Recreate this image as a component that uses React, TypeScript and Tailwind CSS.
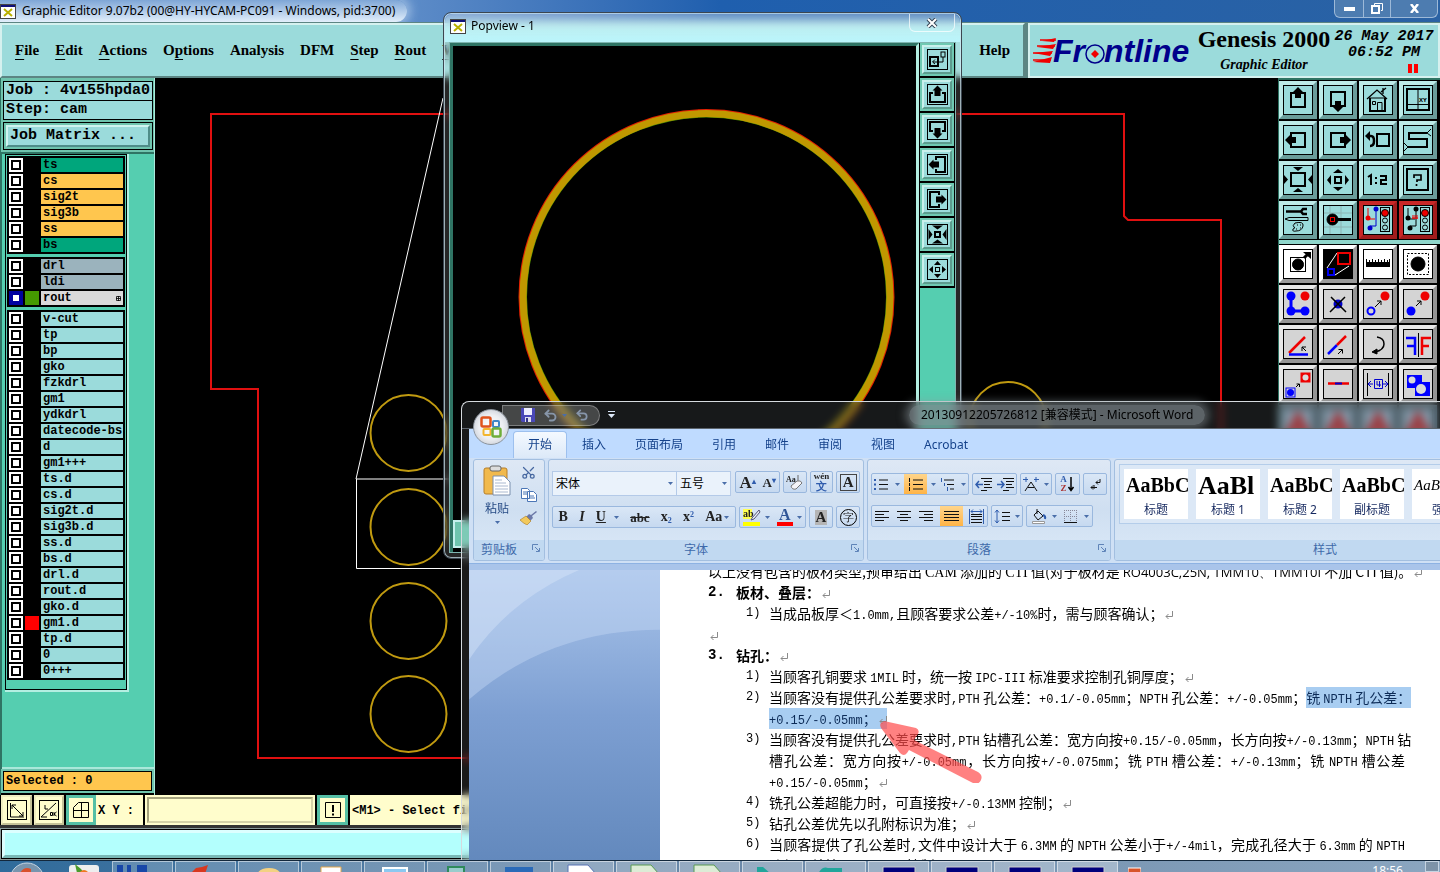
// App.tsx
import React from 'react';
import { LuScissors, LuUndo2, LuRedo2 } from 'react-icons/lu';

interface Layer {
  name: string;
  color: string;
  swatch?: string;
  active?: boolean;
}

const GREEN = 'bg-[#00a67c]';
const AMBER = 'bg-[#ffc64e]';
const GRAY = 'bg-[#9bb3bd]';
const AQUA = 'bg-[#9bdbdb]';

const boardLayers: Layer[] = [
  { name: 'ts', color: GREEN },
  { name: 'cs', color: AMBER },
  { name: 'sig2t', color: AMBER },
  { name: 'sig3b', color: AMBER },
  { name: 'ss', color: AMBER },
  { name: 'bs', color: GREEN },
];

const drillLayers: Layer[] = [
  { name: 'drl', color: GRAY },
  { name: 'ldi', color: GRAY },
  { name: 'rout', color: 'bg-[#dadada]', swatch: 'bg-[#459a00]', active: true },
];

const miscLayers: Layer[] = [
  'v-cut', 'tp', 'bp', 'gko', 'fzkdrl', 'gm1', 'ydkdrl', 'datecode-bs', 'd', 'gm1+++', 'ts.d', 'cs.d',
  'sig2t.d', 'sig3b.d', 'ss.d', 'bs.d', 'drl.d', 'rout.d', 'gko.d', 'gm1.d', 'tp.d', '0', '0+++',
].map((name) => ({ name, color: AQUA, swatch: name === 'gm1.d' ? 'bg-[#ff0000]' : undefined }));

const menus = [
  ['', 'F', 'ile'], ['', 'E', 'dit'], ['', 'A', 'ctions'], ['O', 'p', 'tions'], ['Analysis', '', ''],
  ['DFM', '', ''], ['', 'S', 'tep'], ['', 'R', 'out'], ['', 'W', 'indows'],
];

const MONO = "font-['Liberation_Mono',monospace]";
const SERIF = "font-['Liberation_Serif',serif]";
const SANS = "font-['Noto_Sans','Noto_Sans_CJK_SC',sans-serif]";

const XIcon: React.FC = () => (
  <svg width="16" height="15" viewBox="0 0 16 15">
    <rect x="0.5" y="0.5" width="15" height="14" fill="#fff" stroke="#444" />
    <rect x="1" y="1" width="14" height="2" fill="#10107a" />
    <path d="M4 5l8 7M12 5l-8 7" stroke="#b9b000" strokeWidth="2" />
  </svg>
);

/* ---------- layer list ---------- */

const LayerGroup: React.FC<{ layers: Layer[] }> = ({ layers }) => (
  <div className="flex flex-col gap-[2px] bg-black p-[2px]">
    {layers.map((l) => (
      <label key={l.name} className="flex h-[14px] gap-[2px]">
        <span className={`flex w-[14px] items-center justify-center ${l.active ? 'bg-[#0000a0]' : 'bg-white'}`}>
          <input
            type="checkbox"
            aria-label={l.name}
            className={`size-[10px] appearance-none border-2 bg-white ${l.active ? 'border-[#0000a0]' : 'border-black'}`}
          />
        </span>
        <span className={`w-[14px] ${l.swatch ?? 'bg-black'}`} />
        <span className={`flex flex-1 items-center justify-between pl-[2px] text-[12px] leading-[14px] font-bold whitespace-nowrap ${l.color}`}>
          {l.name}
          {l.active && (
            <svg width="5" height="5" viewBox="0 0 5 5" className="mr-[2px]">
              <path d="M.5.5h4v4h-4zM2.500 0v5M0 2.500h5" fill="none" stroke="#000" strokeWidth="0.8" />
            </svg>
          )}
        </span>
      </label>
    ))}
  </div>
);

const Sidebar: React.FC = () => (
  <aside className={`flex w-[155px] shrink-0 flex-col border-x border-[#2f7464] border-r-[#a9e8da] bg-[#2f7464] ${MONO}`}>
    <div className="flex flex-col gap-[2px] bg-[#6fc4ae] p-[2px] pr-px">
      <div className="mt-px border border-black bg-[#9bdbdb] text-[15px] leading-[18px] font-bold whitespace-pre">
        <div className="border-b border-black pl-[2px]">Job : 4v155hpda0</div>
        <div className="pl-[2px]">Step: cam</div>
      </div>
      <div className="border border-black p-[2px]">
        <button className="block w-full border-2 border-[#d0f4f0] border-r-[#4f8d89] border-b-[#4f8d89] bg-[#9bdbdb] px-[2px] text-left text-[15px] leading-[18px] font-bold">
          Job Matrix ...
        </button>
      </div>
    </div>
    <div className="mt-[2px] ml-px flex flex-1 flex-col border-b-2 border-[#a9e8da] bg-[#55ceb0] pl-[3px]">
      <div className="w-[124px] border-r-2 border-b-2 border-[#b4efe2]">
        <div className="flex flex-col gap-[3px] border border-black bg-[#55ceb0] px-px pt-px pb-[9px]">
          <LayerGroup layers={boardLayers} />
          <LayerGroup layers={drillLayers} />
          <LayerGroup layers={miscLayers} />
        </div>
      </div>
    </div>
    <div className="bg-[#6fc4ae] p-[2px]">
      <div className="border border-black bg-[#ffc64e] px-[2px] text-[12px] leading-[18px] font-bold">Selected : 0</div>
    </div>
    <div className="h-[2px] bg-black" />
  </aside>
);

/* ---------- toolbox ---------- */

const upArrow = <path d="M15 2l6 6h-3v5h-6V8H9z" fill="#000" stroke="none" />;
const nodes = (a: string, b: string, c: string) => (
  <>
    <path d="M5 3v11M5 14h7" stroke={b} />
    <path d="M13 4v17H7" stroke={c} />
    <circle cx="13" cy="4" r="2.5" fill={a} stroke="none" />
    <circle cx="5" cy="13" r="2.5" fill={b} stroke="none" />
    <circle cx="7" cy="23" r="2.5" fill={a} stroke="none" />
    <rect x="17.500" y="2.500" width="9" height="24" />
    <circle cx="22" cy="8" r="3.500" fill="#e00" stroke="#000" />
    <circle cx="22" cy="15.500" r="2.500" />
    <circle cx="22" cy="22.500" r="2.500" />
  </>
);

const viewTools: [string, React.ReactNode][] = [
  ['Pan up', <><rect x="8" y="8" width="14" height="14" strokeWidth="2" />{upArrow}</>],
  ['Pan down', <g transform="rotate(180 15 14.500)"><rect x="8" y="8" width="14" height="14" strokeWidth="2" />{upArrow}</g>],
  ['Home', <><path d="M4 14L14 5l10 9M18 7l5-4M20 3v6" strokeWidth="1.300" /><path d="M7 13v13h15V13" strokeWidth="2" /><path d="M6 13h16M9.500 16.500h3v3h-3zM14.500 26V17.500h4.500V26" /></>],
  ['Window XY', <><rect x="4" y="4" width="22" height="21" strokeWidth="2" /><path d="M15 4v21M4 19.500h22" /><text x="16" y="17" fontSize="6" fontWeight="bold" fill="#000" stroke="none">XY</text></>],
  ['Pan left', <g transform="rotate(-90 15 15)"><rect x="8" y="8" width="14" height="14" strokeWidth="2" />{upArrow}</g>],
  ['Pan right', <g transform="rotate(90 15 15)"><rect x="8" y="8" width="14" height="14" strokeWidth="2" />{upArrow}</g>],
  ['Previous view', <><rect x="14" y="9" width="12" height="12" strokeWidth="2" /><path d="M5 11h3q3 0 3 5t-4 5" strokeWidth="2.500" /><path d="M2 11l5-5v10z" fill="#000" stroke="none" /></>],
  ['Serpentine', <><path d="M24 8H6v6h18v8H5" strokeWidth="2" /><path d="M28 4l-4 4 4 3M1 18l4 4-4 4" /></>],
  ['Zoom out', <><rect x="8" y="8" width="14" height="13" strokeWidth="2" /><path d="M10 2h10l-5 4zM10 27h10l-5-4zM1 10v9l4-4.500zM29 10v9l-4-4.500z" fill="#000" stroke="none" /></>],
  ['Zoom in', <><rect x="12" y="12" width="6" height="6" strokeWidth="2" /><path d="M10 8h10l-5-4zM10 22h10l-5 4zM8 10v10l-4-5zM22 10v10l4-5z" fill="#000" stroke="none" /></>],
  ['Scale 1:2', <path d="M5 12l3-2v10M13 12v2M13 17v2M17 11h6v4h-5v4h6" strokeWidth="2" />],
  ['Help', <><rect x="4" y="4" width="21" height="21" strokeWidth="2" /><path d="M11 13v-3h7v5h-4v2M13.500 19v2" strokeWidth="1.700" /></>],
  ['Setup', <><path d="M3 6.500h15M24 4h-4l-2 2.500 2 2.500h4" strokeWidth="2.500" /><path d="M2 14l4-1.500h19v3H6z" /><path d="M12 18q9-2 8 3t-7 5q-4 1-3-2 3-1 1-2t1-4z" /><path d="M14 20h1M17 20h1M13 24h1M17 23h1" /></>],
  ['Probe', <><path d="M7 1v28M18 1v28M1 8h28M1 22h28" stroke="#8cb5b5" /><path d="M12 14.500h16" strokeWidth="3" /><circle cx="9.500" cy="14.500" r="5.500" fill="#000" /><rect x="7.500" y="12.500" width="4" height="4" stroke="#e00" /></>],
  ['Netlist', nodes('#00c', '#e00', '#00c')],
  ['Netlist compare', <>{nodes('#000', '#000', '#000')}<path d="M9 13h6M10 10v4M12 10v4M14 10v4" stroke="#e00" /></>],
];

const triangle = <path d="M5 25L15 6l10 19zM9 18h12" stroke="#d00" strokeWidth="4" />;

const editTools: [string, React.ReactNode][] = [
  ['Move feature', <><rect x="7.500" y="8.500" width="15" height="14" /><circle cx="15" cy="15.500" r="5.500" fill="#000" /><path d="M21 9l5-5" strokeWidth="3" /><path d="M20 3h8v7z" fill="#000" stroke="none" /></>],
  ['Resize', <><rect width="30" height="30" fill="#000" /><path d="M4 19L14 4M12 26l14-9" stroke="#fff" /><rect x="15" y="4" width="12" height="11" stroke="#e00" strokeWidth="2" /><rect x="5" y="20" width="6" height="6" stroke="#00e" strokeWidth="2" /></>],
  ['Measure', <><rect x="3" y="13" width="24" height="5" fill="#000" stroke="none" /><path d="M3.500 10v4M6.500 11v3M9.500 10v4M12.500 11v3M15.500 10v4M18.500 11v3M21.500 10v4M24.500 11v3M26.500 10v4" /></>],
  ['Select frame', <><rect x="4.500" y="4.500" width="21" height="21" strokeDasharray="2 1.500" /><circle cx="15" cy="15" r="7" fill="#000" /></>],
  ['Chain', <><path d="M8 7v15h14" stroke="#00f" strokeWidth="3" /><g stroke="none"><circle cx="8" cy="7" r="4.500" fill="#00f" /><circle cx="8" cy="22" r="4.500" fill="#00f" /><circle cx="22" cy="22" r="4.500" fill="#00f" /><circle cx="22" cy="7" r="4.500" fill="#e00" /></g></>],
  ['Delete', <><circle cx="15" cy="15" r="4.500" fill="#0000c8" stroke="none" /><path d="M8 8l15 15M22 8L7 23" strokeWidth="1.500" /></>],
  ['Copy point', <><circle cx="8" cy="22" r="3.500" stroke="#00f" strokeWidth="2" /><circle cx="22" cy="7" r="4.500" fill="#e00" stroke="none" /><path d="M12 18l6-6M14 12h4v4" /></>],
  ['Move point', <><circle cx="8" cy="22" r="4.500" fill="#00f" stroke="none" /><circle cx="22" cy="7" r="4.500" fill="#e00" stroke="none" /><path d="M13 17l5-5M14 12h4v4" /></>],
  ['Rotate', <><path d="M6 24L22 8" stroke="#e00" strokeWidth="2.500" /><path d="M6 25.500h19" stroke="#00f" strokeWidth="2.500" /><path d="M23 22l-4-4M19 22v-4h4" /></>],
  ['Line', <><path d="M5 25l9-9" stroke="#00f" strokeWidth="2.500" /><path d="M14 16l9-9" stroke="#e00" strokeWidth="2.500" /><path d="M15 25l4-4M15.500 20.500h4v4" /></>],
  ['Arc', <><path d="M14 8q7 1 7 7t-9 8" strokeWidth="1.500" /><path d="M9 23l5-3v5z" fill="#000" /></>],
  ['Mirror', <><path d="M3 9h9v17M4 17h8" stroke="#00f" strokeWidth="2.500" /><path d="M28 9h-9v17M26 17h-7" stroke="#e00" strokeWidth="2.500" /><path d="M15.500 4v24" /></>],
  ['Copy pad', <><rect x="18" y="4" width="9" height="9" fill="#e00" stroke="#e00" /><circle cx="22.500" cy="8.500" r="3" fill="#dadada" stroke="none" /><rect x="3" y="19" width="9" height="9" stroke="#00f" /><circle cx="7.500" cy="23.500" r="3.500" fill="#00f" stroke="none" /><path d="M13 18l3-3M13.500 15h3v3" /></>],
  ['Break line', <><path d="M5 14.500h21" stroke="#e00" strokeWidth="2.500" /><path d="M12 14.500h7" stroke="#00c" strokeWidth="2" /></>],
  ['Spacing', <><path d="M4.500 4v23M25.500 4v23" /><path d="M5 15h5M20 15h5M8 12l-3 3 3 3M22 12l3 3-3 3M11.500 10.500h8v9h-8zM14 12v4h4M16.500 12v6" stroke="#00c" /></>],
  ['Merge', <g stroke="none"><rect x="4" y="6" width="15" height="13" fill="#00f" /><rect x="12" y="13" width="15" height="14" fill="#00f" /><circle cx="9" cy="11" r="3.500" fill="#dadada" /><circle cx="18" cy="20" r="5" fill="#dadada" /></g>],
  ['Polygon 1', triangle],
  ['Polygon 2', triangle],
  ['Polygon 3', triangle],
  ['Polygon 4', triangle],
];

interface ToolButtonProps {
  label: string;
  face: string;
  children: React.ReactNode;
}

const ToolButton: React.FC<ToolButtonProps> = ({ label, face, children }) => (
  <button aria-label={label} className={`size-[38px] border-4 ${face}`}>
    <svg width="30" height="30" viewBox="0 0 30 30" fill="none" stroke="#000">
      {children}
      <rect x="0.5" y="0.5" width="29" height="29" />
    </svg>
  </button>
);

const faceFor = (set: 'view' | 'edit', i: number) => {
  if (set === 'view') {
    return i > 13
      ? 'border-[#c82828] border-r-[#a01c1c] border-b-[#a01c1c] bg-[#9bdbdb]'
      : 'border-[#bdebe8] border-r-[#6a9c9a] border-b-[#6a9c9a] bg-[#9bdbdb]';
  }
  if (i < 4) return 'border-white border-r-[#9a9a9a] border-b-[#9a9a9a] bg-white';
  if (i > 15) return 'border-[#9bc0d4] border-r-[#7fa2b9] border-b-[#7fa2b9] bg-[#b4d2ec]';
  return 'border-[#e8e8e8] border-r-[#949494] border-b-[#949494] bg-[#d4d4d4]';
};

const Toolbox: React.FC = () => (
  <aside className="w-[162px] shrink-0 overflow-hidden border-l border-[#2f7464] bg-black">
    <div className="grid grid-cols-[repeat(4,38px)] gap-[2px] border-t-2 border-b-4 border-t-[#2f7464] border-b-[#8fd6cb] pt-px pb-px">
      {viewTools.map(([label, icon], i) => (
        <ToolButton key={label} label={label} face={faceFor('view', i)}>{icon}</ToolButton>
      ))}
    </div>
    <div className="grid grid-cols-[repeat(4,38px)] gap-[2px] pt-px">
      {editTools.map(([label, icon], i) => (
        <ToolButton key={label} label={label} face={faceFor('edit', i)}>{icon}</ToolButton>
      ))}
    </div>
  </aside>
);

/* ---------- editor header ---------- */

const Header: React.FC = () => (
  <header className="flex h-[56px] shrink-0 bg-[#5c8583] pt-px">
    <div className={`flex flex-1 items-center justify-between border-2 border-[#d5f1ef] border-r-[#5c8583] border-b-[#5c8583] bg-[#9bdbdb] px-[13px] text-[15px] font-bold ${SERIF}`}>
      <nav className="flex gap-4">
        {menus.map(([a, u, b]) => (
          <button key={a + u + b}>{a}<span className="underline underline-offset-4">{u}</span>{b}</button>
        ))}
      </nav>
      <button>Help</button>
    </div>
    <div className="ml-[3px] flex w-[412px] shrink-0 items-center border-2 border-[#d5f1ef] bg-[#9bdbdb]">
      <svg width="166" height="40" viewBox="0 0 166 40" className="ml-[2px] shrink-0">
        <path d="M10 10l14-3-2 4zM5 16l19-3-3 5zM1 22l20-2-3 5zM1 31l19-5-2 6z" fill="#f00000" />
        <path d="M8 9h16M5 15h18M1 22h19M1 29h18" stroke="#f00000" strokeWidth="1.500" />
        <g fill="#00008b" fontFamily="Liberation Sans" fontWeight="bold" fontStyle="italic">
          <text x="21" y="31" fontSize="32">Fr</text>
          <text x="72" y="31" fontSize="32">ntline</text>
        </g>
        <circle cx="63" cy="23" r="9" fill="#9bdbdb" stroke="#00008b" strokeWidth="1.500" />
        <path d="M63 19l4 4-4 4-4-4z" fill="#f00000" />
      </svg>
      <div className={`flex w-[132px] shrink-0 flex-col items-center font-bold whitespace-nowrap ${SERIF}`}>
        <span className="text-[24px] leading-7">Genesis 2000</span>
        <span className="text-[14px] leading-6 italic">Graphic Editor</span>
      </div>
      <div className={`flex flex-1 flex-col items-center pt-px text-[15px] leading-4 font-bold whitespace-nowrap italic ${MONO}`}>
        <span>26 May 2017</span>
        <span>06:52 PM</span>
        <span className="mt-[3px] mr-5 flex gap-[2px] self-end">
          <i className="h-[9px] w-[4px] bg-[#ff0000]" />
          <i className="h-[9px] w-[4px] bg-[#ff0000]" />
        </span>
      </div>
    </div>
  </header>
);

const Canvas: React.FC = () => (
  <main className="min-w-0 flex-1 overflow-hidden bg-black">
    <svg className="block h-full w-full" viewBox="155 78 1123 717" preserveAspectRatio="xMinYMin slice" fill="none">
      <path d="M1221 795V220h-93l-4-4V114H211v275h47v369h964" stroke="#e01010" strokeWidth="2" />
      <path d="M443 98l-87 381h104M356.500 479v89.500h104" stroke="#fff" />
      {[433, 527, 621, 714].map((y) => (
        <circle key={y} cx="408.500" cy={y} r="38" stroke="#c09a10" strokeWidth="2" />
      ))}
      <circle cx="1008" cy="420" r="38" stroke="#c09a10" strokeWidth="2" />
    </svg>
  </main>
);

const squareBtn = 'flex items-center justify-center border-2 border-[#f0edc0] border-r-[#c5c297] border-b-[#c5c297] bg-[#fffdcc]';

const StatusRow: React.FC = () => (
  <div className={`flex h-[33px] shrink-0 items-stretch gap-[2px] border-b-[3px] border-[#333] bg-black pl-px text-[12px] font-bold ${MONO}`}>
    <button aria-label="Absolute" className={`w-[31px] ${squareBtn}`}>
      <svg width="20" height="20" viewBox="0 0 20 20" fill="none" stroke="#000">
        <rect x=".5" y=".5" width="19" height="19" />
        <path d="M3.500 3v14H17M5 5l11 11M5 9V5h4M16 12v4h-4" />
      </svg>
    </button>
    <button aria-label="Polar" className={`w-[30px] ${squareBtn}`}>
      <svg width="20" height="20" viewBox="0 0 20 20" fill="none" stroke="#000">
        <rect x=".5" y=".5" width="19" height="19" />
        <path d="M2 17L17 3M2 17h6M6 5v4h3M11.500 12.500h2v3h-2zM15 12v4M17.500 12L15 14l2.500 2" />
      </svg>
    </button>
    <div className="flex bg-[#fffdcc]">
      <button aria-label="Grid" className="flex w-[30px] items-center justify-center border-[3px] border-[#55bfa5] bg-[#fffdcc]">
        <svg width="16" height="16" viewBox="0 0 16 16" fill="none" stroke="#000">
          <path d="M.5 5.500l5-5h10v15H.5zM8.500 0v16M0 8.500h16" />
        </svg>
      </button>
      <label htmlFor="xy" className="w-[47px] pl-[2px] leading-[32px] whitespace-pre">X Y :</label>
    </div>
    <div className="flex bg-[#fffdcc] p-[2px]">
      <input id="xy" className="w-[166px] border-2 border-[#a5a37e] border-r-[#d5d2a7] border-b-[#d5d2a7] bg-[#fffdcc] px-1 outline-none" />
    </div>
    <button aria-label="Confirm" className="flex w-[31px] items-center justify-center border-[3px] border-[#55bfa5] bg-[#fffdcc]">
      <svg width="16" height="16" viewBox="0 0 16 16" fill="none" stroke="#000">
        <path d="M.5.5h15v15H.5z" />
        <path d="M8 3v7M8 11.500v2" strokeWidth="2" />
      </svg>
    </button>
    <div className="flex-1 bg-[#fffdcc] pl-[2px] leading-[32px] whitespace-nowrap">&lt;M1&gt; - Select first point</div>
  </div>
);

/* ---------- popview ---------- */

const popArrow = <><path d="M6 9H3v9h15V9h-3" strokeWidth="2" /><path d="M10.500 1.500l5 5h-2V12h-6V6.500h-2z" fill="#000" stroke="none" /></>;

const popTools: [string, React.ReactNode][] = [
  ['Source window', <><rect x="3" y="8" width="8" height="9" strokeWidth="2" /><rect x="14" y="3" width="4" height="5" /><path d="M16 8v5H6M8 10.500L5.500 13l2.500 2" /></>],
  ['Up', popArrow],
  ['Down', <g transform="rotate(180 10.500 10.500)">{popArrow}</g>],
  ['Left', <g transform="rotate(-90 10.500 10.500)">{popArrow}</g>],
  ['Right', <g transform="rotate(90 10.500 10.500)">{popArrow}</g>],
  ['Shrink', <><rect x="8" y="8" width="5" height="5" strokeWidth="2" /><path d="M5 1.500h11l-5.500 4zM5 19.500h11l-5.500-4zM1.500 5v11l4-5.500zM19.500 5v11l-4-5.500z" fill="#000" stroke="none" /></>],
  ['Grow', <><rect x="8.500" y="8.500" width="4" height="4" /><path d="M7 6h7l-3.500-4zM7 15h7l-3.500 4zM6 7v7l-4-3.500zM15 7v7l4-3.500z" fill="#000" stroke="none" /></>],
];

const Popview: React.FC = () => (
  <section className="absolute top-[12px] left-[443px] flex h-[547px] w-[519px] flex-col rounded-lg border border-[#3c4650] bg-white/15 px-[5px] pb-[5px] shadow-[inset_0_0_0_1px_rgba(210,235,245,0.7)] backdrop-blur-xs">
    <div className={`-mx-[4px] mt-px flex h-[28px] shrink-0 items-start justify-between rounded-t-lg bg-linear-to-b from-white/20 to-[#bdf8ff]/90 pr-[5px] pl-[5px] text-[12px] text-black ${SANS}`}>
      <span className="flex items-center gap-[5px] pt-[3px]"><XIcon />Popview - 1</span>
      <button aria-label="Close" className="flex h-[18px] w-[46px] items-center justify-center rounded-b-md border border-t-0 border-white/70 text-white">
        <svg width="12" height="10" viewBox="0 0 12 10">
          <path d="M2 1l8 8M10 1L2 9" stroke="#345" strokeWidth="4" />
          <path d="M2 1l8 8M10 1L2 9" stroke="#fff" strokeWidth="2" />
        </svg>
      </button>
    </div>
    <div className="flex min-h-0 flex-1 border border-[#7fb5b0] bg-black">
      <div className="min-w-0 flex-1 border-t-[3px] border-r-[3px] border-l-[3px] border-[#2f7464] border-r-[#b4efe2]">
        <svg className="block w-full" height="474" viewBox="453 46 463 474" preserveAspectRatio="xMinYMin slice" fill="none">
          <circle cx="706.500" cy="297" r="187" stroke="#e02000" strokeWidth="2" />
          <circle cx="706.500" cy="297" r="180.500" stroke="#4f9000" strokeWidth="2" />
          <circle cx="706.500" cy="297" r="183.500" stroke="#c09800" strokeWidth="7" />
        </svg>
        <div className="h-7 border-2 border-[#c4efec] bg-[#6fc4ae]" />
      </div>
      <div className="ml-px w-[35px] shrink-0 bg-[#55ceb0]">
        <div className="flex flex-col gap-[2px] bg-black pr-px pb-[2px]">
          {popTools.map(([label, icon]) => (
            <button key={label} aria-label={label} className="h-[33px] border-2 border-[#6fc9b2]">
              <span className="flex h-full items-center justify-center border-2 border-[#c9f0ec] border-r-[#5d9c8e] border-b-[#5d9c8e] bg-[#9bdbdb]">
                <svg width="21" height="21" viewBox="0 0 21 21" fill="none" stroke="#000">
                  <rect x=".5" y=".5" width="20" height="20" />
                  {icon}
                </svg>
              </span>
            </button>
          ))}
        </div>
      </div>
    </div>
  </section>
);

/* ---------- word ---------- */

const tabs = ['开始', '插入', '页面布局', '引用', '邮件', '审阅', '视图', 'Acrobat'];

const Caret: React.FC = () => (
  <svg width="5" height="3" viewBox="0 0 5 3" className="shrink-0"><path d="M0 0h5L2.500 3z" fill="#4a6ea9" /></svg>
);

interface GroupProps {
  title: string;
  width: string;
  launcher?: boolean;
  children: React.ReactNode;
}

const Group: React.FC<GroupProps> = ({ title, width, launcher = true, children }) => (
  <div className={`flex h-[102px] shrink-0 flex-col overflow-hidden rounded-[3px] border border-[#a3bfe0] bg-linear-to-b from-[#dee8f5] via-[#cfdff1] to-[#dbe9f8] ${width}`}>
    <div className="flex-1">{children}</div>
    <div className={`relative h-[20px] bg-[#c1d9f1] text-center text-[12px] leading-[19px] text-[#3e6aaa] ${launcher ? 'pr-5' : ''}`}>
      {title}
      {launcher && (
        <svg width="8" height="8" viewBox="0 0 8 8" className="absolute top-1 right-1" fill="none" stroke="#5f84b8">
          <path d="M.5 6V.5H6M3 3l4 4M7.500 4v3.500H4" />
        </svg>
      )}
    </div>
  </div>
);

const Strip: React.FC<{ className?: string; children: React.ReactNode }> = ({ className = '', children }) => (
  <div className={`flex h-[22px] items-center justify-around rounded-[2px] border border-[#9ab8de] bg-linear-to-b from-[#dae7f6] to-[#c6d9f0] text-[14px] leading-none font-bold text-[#222] ${SERIF} ${className}`}>
    {children}
  </div>
);

const Lines: React.FC<{ d: string; extra?: React.ReactNode }> = ({ d, extra }) => (
  <svg width="17" height="15" viewBox="0 0 17 15" fill="none" stroke="#111"><path d={d} />{extra}</svg>
);

const hot = 'flex h-full items-center bg-linear-to-b from-[#ffd58a] to-[#ffb445] px-[3px]';

const styles = [
  { sample: 'AaBbC', name: '标题', size: 'text-[20px] font-bold' },
  { sample: 'AaBl', name: '标题 1', size: 'text-[26px] font-bold' },
  { sample: 'AaBbC', name: '标题 2', size: 'text-[20px] font-bold' },
  { sample: 'AaBbC', name: '副标题', size: 'text-[20px] font-bold' },
  { sample: 'AaBbCc', name: '强调', size: 'text-[15px] italic' },
];

const Ribbon: React.FC = () => (
  <div className="flex h-[106px] shrink-0 gap-[3px] overflow-hidden border-b border-[#8db2e3] bg-[#cfe0f5] pt-px pl-[4px]">
    <Group title="剪贴板" width="w-[72px]">
      <div className="flex justify-between pt-[5px] pr-[7px] pl-[9px]">
        <button className="flex flex-col items-center text-[12px] leading-4 text-[#274b85]">
          <svg width="28" height="31" viewBox="0 0 28 31" className="mb-[5px]">
            <rect x="1" y="3" width="23" height="26" rx="2" fill="#f1b94c" stroke="#b77f28" />
            <rect x="7" y="1" width="11" height="5" rx="2" fill="#ddd" stroke="#666" />
            <path d="M10 11h11l6 6v13H10z" fill="#fff" stroke="#7a8fae" />
            <path d="M12 15h7M12 18h11M12 21h13M12 24h13M12 27h13" stroke="#aab9d0" />
          </svg>
          粘贴
          <span className="mt-1"><Caret /></span>
        </button>
        <div className="flex flex-col items-center gap-[8px]">
          <button aria-label="剪切"><LuScissors size={15} color="#4667a0" className="-rotate-90" /></button>
          <button aria-label="复制">
            <svg width="16" height="14" viewBox="0 0 16 14" fill="#fff" stroke="#4b76b6">
              <path d="M.5.5h6l2 2v8h-8zM6.500 3.500h6l3 3v7h-9z" />
              <path d="M2 4h4M2 6h4M8 8h5M8 10h6" />
            </svg>
          </button>
          <button aria-label="格式刷">
            <svg width="17" height="15" viewBox="0 0 17 15">
              <path d="M16 1l-5 4-2-1-3 3 4 4 3-3-1-2 5-4z" fill="#6b78a8" />
              <path d="M6 6l5 5-4 4q-4-2-7-5z" fill="#f2c95c" stroke="#a87822" strokeWidth=".6" />
            </svg>
          </button>
        </div>
      </div>
    </Group>

    <Group title="字体" width="w-[316px]">
      <div className="flex items-start gap-[3px] px-[3px] pt-[11px]">
        <div className={`mr-px flex h-[25px] text-[12px] text-black ${SANS}`}>
          <button aria-label="字体" className="flex w-[125px] items-center justify-between border border-[#b4cae8] bg-[#eaf2fb] px-[3px]">宋体<Caret /></button>
          <button aria-label="字号" className="flex w-[54px] items-center justify-between border border-l-0 border-[#b4cae8] bg-[#eaf2fb] px-[3px]">五号<Caret /></button>
        </div>
        <Strip className="w-[46px]">
          <button className="text-[17px]">A<sup className="text-[8px] text-[#2f5cad]">▴</sup></button>
          <button className="text-[13px]">A<sup className="text-[8px] text-[#2f5cad]">▾</sup></button>
        </Strip>
        <Strip className="w-[24px]">
          <button aria-label="清除格式">
            <svg width="18" height="17" viewBox="0 0 18 17">
              <text x="0" y="8" fontSize="8" fill="#222">Aa</text>
              <path d="M12 1v7" stroke="#666" />
              <path d="M5 12l6-5q4-1 5 2l-6 6q-4 1-5-3z" fill="#f4f4f8" stroke="#777" />
            </svg>
          </button>
        </Strip>
        <Strip className="w-[24px]">
          <button className="flex flex-col items-center text-[9px] leading-[9px]">wén<span className="text-[11px] leading-[11px] text-[#2f5cad]">文</span></button>
        </Strip>
        <Strip className="w-[24px]"><button className="border border-[#444] px-[2px] text-[15px]">A</button></Strip>
      </div>
      <div className="mt-[10px] flex gap-[3px] px-[3px]">
        <Strip className="w-[184px]">
          <button>B</button>
          <button className="italic">I</button>
          <button className="flex items-center gap-[8px]"><u>U</u><Caret /></button>
          <button className="text-[13px] line-through">abc</button>
          <button>x<sub className="text-[8px] text-[#2f5cad]">2</sub></button>
          <button>x<sup className="text-[8px] text-[#2f5cad]">2</sup></button>
          <button className="flex items-center gap-[2px]">Aa<Caret /></button>
        </Strip>
        <Strip className="w-[67px]">
          <button className="flex items-center gap-1">
            <svg width="18" height="18" viewBox="0 0 18 18">
              <rect y="1" width="9" height="10" fill="#ffff50" />
              <text x="0" y="9" fontSize="10" fill="#222">ab</text>
              <path d="M16 2l-7 8-1 2 3-1 6-7z" fill="#e8eef8" stroke="#557" />
              <rect y="14" width="17" height="4" fill="#ff0" />
            </svg>
            <Caret />
          </button>
          <button className="flex items-center gap-1">
            <span className="border-b-4 border-[#ff0000] px-[2px] text-[16px] leading-[14px] text-[#2f5597]">A</span>
            <Caret />
          </button>
        </Strip>
        <Strip className="w-[24px]"><button className="bg-[#b5b5b5] px-px text-[15px]">A</button></Strip>
        <Strip className="w-[24px]"><button className="flex size-[17px] items-center justify-center rounded-full border border-black text-[11px] font-normal">字</button></Strip>
      </div>
    </Group>

    <Group title="段落" width="w-[244px]">
      <div className="flex gap-[3px] px-[3px] pt-[13px]">
        <Strip className="w-[98px]">
          <button aria-label="项目符号"><Lines d="M5 3h9M5 7.500h9M5 12h9" extra={<path d="M0 3h2M0 7.500h2M0 12h2" stroke="#2f5cad" strokeWidth="2" />} /></button>
          <Caret />
          <button aria-label="编号" className={hot}><Lines d="M6 3h10M6 7.500h10M6 12h10" extra={<path d="M2.500 1v4M2.500 6v3M2.500 10v4" />} /></button>
          <Caret />
          <button aria-label="多级列表"><Lines d="M4 3h10M7 7.500h7M10 12h4" extra={<path d="M1.500 1v4M4.500 6v3M7.500 10v4" stroke="#2f5cad" />} /></button>
          <Caret />
        </Strip>
        <Strip className="w-[45px]">
          <button aria-label="减少缩进"><Lines d="M6 1.500h11M9 4.500h8M9 7.500h6M9 10.500h8M6 13.500h6" extra={<path d="M8 7.500H1M4 4L1 7.500 4 11" stroke="#2f5cad" strokeWidth="1.500" />} /></button>
          <button aria-label="增加缩进"><Lines d="M6 1.500h11M9 4.500h8M9 7.500h6M9 10.500h8M6 13.500h6" extra={<path d="M0 7.500h7M4 4l3 3.500L4 11" stroke="#2f5cad" strokeWidth="1.500" />} /></button>
        </Strip>
        <Strip className="w-[32px]">
          <button aria-label="中文版式"><Lines d="M2 14l6-9 6 9M5 10.500h6" extra={<path d="M0 2.500h5M3 0v5M11 2.500h5M13 0v5" stroke="#2f5cad" />} /></button>
          <Caret />
        </Strip>
        <Strip className="w-[25px]">
          <button className="flex items-center text-[9px] leading-[9px]"><span className="flex flex-col"><span className="text-[#2f5cad]">A</span><span className="text-[#a33]">Z</span></span>
            <svg width="8" height="15" viewBox="0 0 8 15" fill="none" stroke="#000"><path d="M4 0v13M1.500 10L4 13.500 6.500 10" strokeWidth="1.500" /></svg>
          </button>
        </Strip>
        <Strip className="w-[24px]"><button aria-label="显示标记"><Lines d="M13 2v3.500H9M11 3.500L9 5.500l2 2M7 8v4M4 10.500h6M6 8.500l-2 2 2 2" /></button></Strip>
      </div>
      <div className="mt-[10px] flex gap-[3px] px-[3px]">
        <Strip className="w-[117px]">
          <button aria-label="左对齐"><Lines d="M1 2.500h14M1 5.500h9M1 8.500h14M1 11.500h9" /></button>
          <button aria-label="居中"><Lines d="M1 2.500h14M4 5.500h8M1 8.500h14M4 11.500h8" /></button>
          <button aria-label="右对齐"><Lines d="M1 2.500h14M6 5.500h9M1 8.500h14M6 11.500h9" /></button>
          <button aria-label="两端对齐" className={hot}><Lines d="M1 2.500h15M1 5.500h15M1 8.500h15M1 11.500h15" /></button>
          <button aria-label="分散对齐"><Lines d="M3 5.500h11M3 7.500h11M3 10.500h11M3 13.500h11" extra={<path d="M1.500 0v15M15.500 0v15M3 2.500h11M5 .5l-2 2 2 2M12 .5l2 2-2 2" stroke="#2f5cad" />} /></button>
        </Strip>
        <Strip className="w-[32px]">
          <button aria-label="行距"><Lines d="M8 3.500h8M8 7.500h8M8 11.500h8" extra={<path d="M3 1v13M1 3.500L3 1l2 2.500M1 11.500L3 14l2-2.500" stroke="#2f5cad" />} /></button>
          <Caret />
        </Strip>
        <Strip className="w-[67px]">
          <button aria-label="底纹"><Lines d="M4 6l4-4 5 5-5 4zM7 5V0" extra={<><path d="M13 6q3 1 2 4" stroke="#2f5cad" strokeWidth="2" /><path d="M2.500 12.500h12v2h-12z" fill="#fff" stroke="#999" /></>} /></button>
          <Caret />
          <button aria-label="边框"><Lines d="" extra={<><path d="M2.500 1v12M8.500 1v12M14.500 1v12M2 1.500h13M2 7.500h13" stroke="#889" strokeDasharray="1 1" /><path d="M2 13.500h13" /></>} /></button>
          <Caret />
        </Strip>
      </div>
    </Group>

    <Group title="样式" width="w-[422px]" launcher={false}>
      <div className="mt-[4px] ml-[4px] flex gap-2 border border-[#b4cdea] bg-[#dce8f6] p-[4px]">
        {styles.map((s) => (
          <button key={s.name} className="flex h-[50px] w-[64px] shrink-0 flex-col items-center justify-between overflow-hidden bg-white pb-px text-black">
            <span className={`flex h-[32px] w-full items-center overflow-hidden pl-[2px] ${s.size} ${SERIF}`}>{s.sample}</span>
            <span className="text-[12px] leading-4 text-[#15285f]">{s.name}</span>
          </button>
        ))}
      </div>
    </Group>
  </div>
);

// Latin runs are set half as wide as the Chinese characters around them
const Mixed: React.FC<{ text: string }> = ({ text }) => (
  <>
    {text.split(/([\x21-\x7e]+)/).map((part, i) =>
      i % 2 ? <span key={i} className={`text-[12px] ${MONO}`}>{part}</span> : part
    )}
  </>
);

const Ret: React.FC = () => (
  <svg width="8" height="9" viewBox="0 0 8 9" className="ml-[2px] inline-block" fill="none" stroke="#8a8a8a">
    <path d="M7.500 0v5.500H1M3.500 3L1 5.500 3.500 8" />
  </svg>
);

interface DocLine {
  num?: string;
  text: string;
  sel?: string;
  full?: boolean;
  end?: boolean;
}

const drilling: DocLine[] = [
  { num: '1)', text: '当顾客孔铜要求 1MIL 时，统一按 IPC-III 标准要求控制孔铜厚度；', end: true },
  { num: '2)', text: '当顾客没有提供孔公差要求时,PTH 孔公差：+0.1/-0.05mm；NPTH 孔公差：+/-0.05mm；', sel: '铣 NPTH 孔公差：', full: true },
  { text: '', sel: '+0.15/-0.05mm；', end: true },
  { num: '3)', text: '当顾客没有提供孔公差要求时,PTH 钻槽孔公差：宽方向按+0.15/-0.05mm，长方向按+/-0.13mm；NPTH 钻', full: true },
  { text: '槽孔公差：宽方向按+/-0.05mm，长方向按+/-0.075mm；铣 PTH 槽公差：+/-0.13mm；铣 NPTH 槽公差', full: true },
  { text: '+0.15/-0.05mm；', end: true },
  { num: '4)', text: '铣孔公差超能力时，可直接按+/-0.13MM 控制；', end: true },
  { num: '5)', text: '钻孔公差优先以孔附标识为准；', end: true },
  { num: '6)', text: '当顾客提供了孔公差时,文件中设计大于 6.3MM 的 NPTH 公差小于+/-4mil，完成孔径大于 6.3mm 的 NPTH', full: true },
  { text: '孔径公差按照+/-4mil 控制。' },
];

const Line: React.FC<{ line: DocLine }> = ({ line }) => (
  <div className="flex h-[21px] pl-[38px]">
    <span className={`w-[23px] shrink-0 text-[12px] ${MONO}`}>{line.num}</span>
    <p className={`whitespace-nowrap ${line.full ? 'w-[636px] [text-align-last:justify]' : ''}`}>
      <Mixed text={line.text} />
      {line.sel && (
        <mark className="inline-block h-[21px] bg-[#a8cdf1] align-top text-[#0c2b57] [text-align-last:auto]">
          <Mixed text={line.sel} />
          {line.end && <Ret />}
        </mark>
      )}
      {line.end && !line.sel && <Ret />}
    </p>
  </div>
);

const Document: React.FC = () => (
  <div className="flex min-h-0 flex-1 bg-linear-to-b from-[#a9c4ea] via-[#7d9fd2] to-[#6389bd]">
    <div className="w-[191px] shrink-0 overflow-hidden">
      <svg className="block h-full w-full" viewBox="0 0 191 291" preserveAspectRatio="none">
        <path d="M0 0h191v60Q80 60 0 130z" fill="#c3d8f4" opacity="0.45" />
        <path d="M0 0h110Q40 30 0 90z" fill="#dce9fa" opacity="0.4" />
      </svg>
    </div>
    <article className="relative flex-1 overflow-hidden bg-white pl-12 font-['Noto_Sans_CJK_SC',sans-serif] text-[14px] leading-[21px] text-black">
      <div className="-mt-[9px]">
        <p className="h-[21px] whitespace-nowrap">
          以上没有包含的板材类型,预审给出 <span className={SERIF}>CAM</span> 添加的 <span className={SERIF}>CTI</span> 值(对于板材是 <span className="font-['Open_Sans',sans-serif] text-[13px]">RO4003C,25N, TMM10、TMM10I</span> 不加 CTI 值)。<Ret />
        </p>
        <h2 className="flex h-[21px] font-bold"><span className={`w-[28px] ${MONO}`}>2.</span>板材、叠层：<span><Ret /></span></h2>
        <Line line={{ num: '1)', text: '当成品板厚＜1.0mm,且顾客要求公差+/-10%时，需与顾客确认；', end: true }} />
        <p className="h-[21px]"><Ret /></p>
        <h2 className="flex h-[21px] font-bold"><span className={`w-[28px] ${MONO}`}>3.</span>钻孔：<span><Ret /></span></h2>
        {drilling.map((line, i) => <Line key={i} line={line} />)}
      </div>
      <svg width="104" height="64" viewBox="878 718 104 64" className="absolute top-[149px] left-[218px]">
        <path d="M884 720l32 7q4 2 2 6l-4 6 64 32q5 3 3 8t-8 3l-64-33-2 3q-3 4-7 0l-19-25q-3-6 5-7z" fill="#ff4c4c" opacity="0.7" />
      </svg>
    </article>
  </div>
);

const Word: React.FC = () => (
  <section className={`absolute top-[401px] right-0 bottom-[12px] left-[461px] flex flex-col rounded-tl-lg border-t border-l border-[#d5dade] bg-white/10 pl-[7px] backdrop-blur-xs ${SANS}`}>
    <div className="-ml-[7px] flex h-[27px] shrink-0 items-center rounded-tl-lg border-b border-[#5c646c] bg-[#10161c]/30">
      <div className="ml-[40px] flex h-[21px] w-[98px] items-center rounded-r-full border border-white/30 bg-white/20 pl-[18px]">
        <button aria-label="保存">
          <svg width="14" height="14" viewBox="0 0 14 14">
            <path d="M0 0h14v14H1l-1-1z" fill="#4a48b8" />
            <rect x="3" width="8" height="7" fill="#eef" />
            <rect x="4" y="9" width="6" height="5" fill="#dde" />
            <rect x="5" y="10" width="2" height="4" fill="#338" />
          </svg>
        </button>
        <button aria-label="撤消" className="ml-2 flex items-center gap-1 text-[#8796aa]"><LuUndo2 size={15} strokeWidth={3} /><Caret /></button>
        <button aria-label="恢复" className="ml-2 text-[#8796aa]"><LuRedo2 size={14} strokeWidth={3} className="-scale-x-100" /></button>
      </div>
      <svg width="7" height="8" viewBox="0 0 7 8" className="ml-2"><path d="M0 .5h7" stroke="#dce8f8" /><path d="M0 3h7L3.500 7z" fill="#dce8f8" /></svg>
      <h1 className="ml-[294px] rounded-full bg-[#8b959b]/60 px-3 text-[12px] leading-5 whitespace-nowrap text-black shadow-[0_0_8px_4px_rgba(139,149,155,0.5)]">
        20130912205726812 [兼容模式] - Microsoft Word
      </h1>
    </div>
    <div className="flex h-[29px] shrink-0 items-end gap-px bg-[#bfdbff] pl-[44px] text-[12px] text-[#15428b]">
      {tabs.map((t, i) => (
        <button
          key={t}
          className={`h-[27px] rounded-t px-[14px] whitespace-nowrap ${i === 0 ? 'border border-b-0 border-[#9dc0ee] bg-linear-to-b from-[#f4f9ff] to-[#dce9f8] px-[13px]' : ''}`}
        >
          {t}
        </button>
      ))}
    </div>
    <Ribbon />
    <div className="h-[6px] shrink-0 bg-[#a9c4ea]" />
    <Document />
    <button aria-label="Office" className="absolute top-[7px] left-[11px] flex size-[36px] items-center justify-center rounded-full border border-[#8b939c] bg-radial from-white via-[#eceef2] to-[#b9bfc9]">
      <svg width="24" height="24" viewBox="0 0 24 24" fill="none" strokeWidth="2.500">
        <rect x="2.500" y="2.500" width="9" height="9" rx="1.500" stroke="#e0531c" />
        <rect x="14" y="6" width="6" height="6" rx="1" stroke="#3f86c6" strokeWidth="2" />
        <rect x="4.500" y="14" width="7" height="6" rx="1" stroke="#f3b52d" strokeWidth="2" />
        <rect x="13.500" y="13.500" width="8" height="8" rx="1.500" stroke="#6fae3a" />
      </svg>
    </button>
  </section>
);

/* ---------- taskbar ---------- */

const dos = <path d="M14 5h32v8H14z" fill="#00007c" stroke="#ccc" />;
const sheet = <path d="M14 12V3h20l8 9z" fill="#dcecd6" stroke="#5a9a55" />;
const tasks: React.ReactNode[] = [
  <path d="M4 12V3h6v9zM14 12V3h4v9zM24 12V3h10v9z" fill="#1747a8" />,
  <path d="M14 12l6-6 6-1 6-2-3 9z" fill="#d83820" />,
  <path d="M18 12q3-6 12-6t12 6z" fill="#f3d182" />,
  <path d="M19 12V5h20v7z" fill="#fff" stroke="#e5a74d" />,
  <path d="M18 12V6h24v6z" fill="#8cc8f0" stroke="#fff" strokeWidth="2" />,
  <path d="M20 12V5h16v7" fill="#9cc" stroke="#2f8a5c" strokeWidth="2" />,
  <path d="M14 12V5h28v7z" fill="#2a6ab8" />,
  <path d="M14 12V3h20l8 9z" fill="#fff" stroke="#5872b4" />,
  sheet, sheet,
  <path d="M14 12V5h6l8 7z" fill="#22a59b" />,
  <path d="M12 12q4-8 10-6h14v6z" fill="#22a59b" />,
  dos, dos, dos, dos,
];

const Taskbar: React.FC = () => (
  <footer className={`flex h-[12px] shrink-0 overflow-hidden border-t border-[#13283c] bg-linear-to-r from-[#2f6b9b] via-[#6a88a8] to-[#8ba6c0] ${SANS}`}>
    <button aria-label="Start" className="ml-[10px] h-[12px] w-[34px] shrink-0">
      <svg width="34" height="12" viewBox="0 0 34 12"><circle cx="17" cy="19" r="17" fill="#7895ae" stroke="#c6d5e2" /><path d="M10 12q4-7 11-4v4z" fill="#d8502c" /></svg>
    </button>
    <svg width="30" height="12" viewBox="0 0 30 12" className="mr-[13px] ml-[25px] shrink-0"><rect y="4" width="30" height="10" rx="3" fill="#eee" /><path d="M6 3l6 5 3 4H8z" fill="#4b9a2c" /><path d="M10 12q5-6 10 0z" fill="#f07820" /></svg>
    <div className="flex gap-[2px]">
      {tasks.map((icon, i) => (
        <button key={i} aria-label={`Task ${i + 1}`} className={`w-[61px] border-x border-t border-white/50 ${i > 6 ? 'bg-white/30' : 'bg-white/20'}`}>
          <svg className="block" width="59" height="12" viewBox="0 0 59 12">{icon}</svg>
        </button>
      ))}
    </div>
    <svg width="13" height="12" viewBox="0 0 13 12" className="ml-[10px]"><rect y="7" width="13" height="8" fill="#d8542a" stroke="#fff" /></svg>
    <time className="mr-[22px] ml-auto pt-[2px] text-[12px] leading-4 text-white">18:56</time>
    <button aria-label="Show desktop" className="mr-px w-[14px] border border-[#c5d4e2] bg-[#7d93a8]" />
  </footer>
);

const App: React.FC = () => {
  return (
    <div className="relative flex h-screen flex-col overflow-hidden bg-black text-black">
      <div className={`flex h-[22px] shrink-0 items-center bg-linear-to-r from-[#a9c6e8] via-[#1f5fae] to-[#2a62a4] text-[12px] ${SANS}`}>
        <span className="flex h-full items-center gap-[6px] rounded-r-full bg-linear-to-b from-[#7ea6d6] to-[#e3effb] pr-3 whitespace-nowrap shadow-[0_0_10px_4px_rgba(190,214,240,0.6)]">
          <XIcon />Graphic Editor 9.07b2 (00@HY-HYCAM-PC091 - Windows, pid:3700)
        </span>
        <div className="mr-[2px] ml-auto flex h-[18px] self-start overflow-hidden rounded-b-md border border-t-0 border-[#9db9d8] bg-[#4d7cb0]">
          <button aria-label="Minimize" className="flex w-[29px] items-center justify-center border-r border-[#9db9d8]"><svg width="11" height="4"><rect width="11" height="4" fill="#fff" /></svg></button>
          <button aria-label="Restore" className="flex w-[27px] items-center justify-center border-r border-[#9db9d8]">
            <svg width="12" height="11" viewBox="0 0 12 11" fill="none" stroke="#fff"><path d="M3.500 2V.5h8v7H10" /><rect x="1" y="3" width="7" height="7" strokeWidth="2" /></svg>
          </button>
          <button aria-label="Close editor" className="flex w-[46px] items-center justify-center"><svg width="11" height="9" viewBox="0 0 11 9"><path d="M2 0l7 9M9 0L2 9" stroke="#fff" strokeWidth="2.500" /></svg></button>
        </div>
      </div>
      <Header />
      <div className="flex min-h-0 flex-1">
        <Sidebar />
        <Canvas />
        <Toolbox />
      </div>
      <StatusRow />
      <div className="h-[32px] shrink-0 bg-[#8a9a99] p-[2px]">
        <div className="h-full border-[3px] border-[#dcffff] border-b-[#79b9b7] bg-[#b3fffd] outline-1 outline-black" />
      </div>
      <Taskbar />
      <Popview />
      <Word />
    </div>
  );
};

export default App;
